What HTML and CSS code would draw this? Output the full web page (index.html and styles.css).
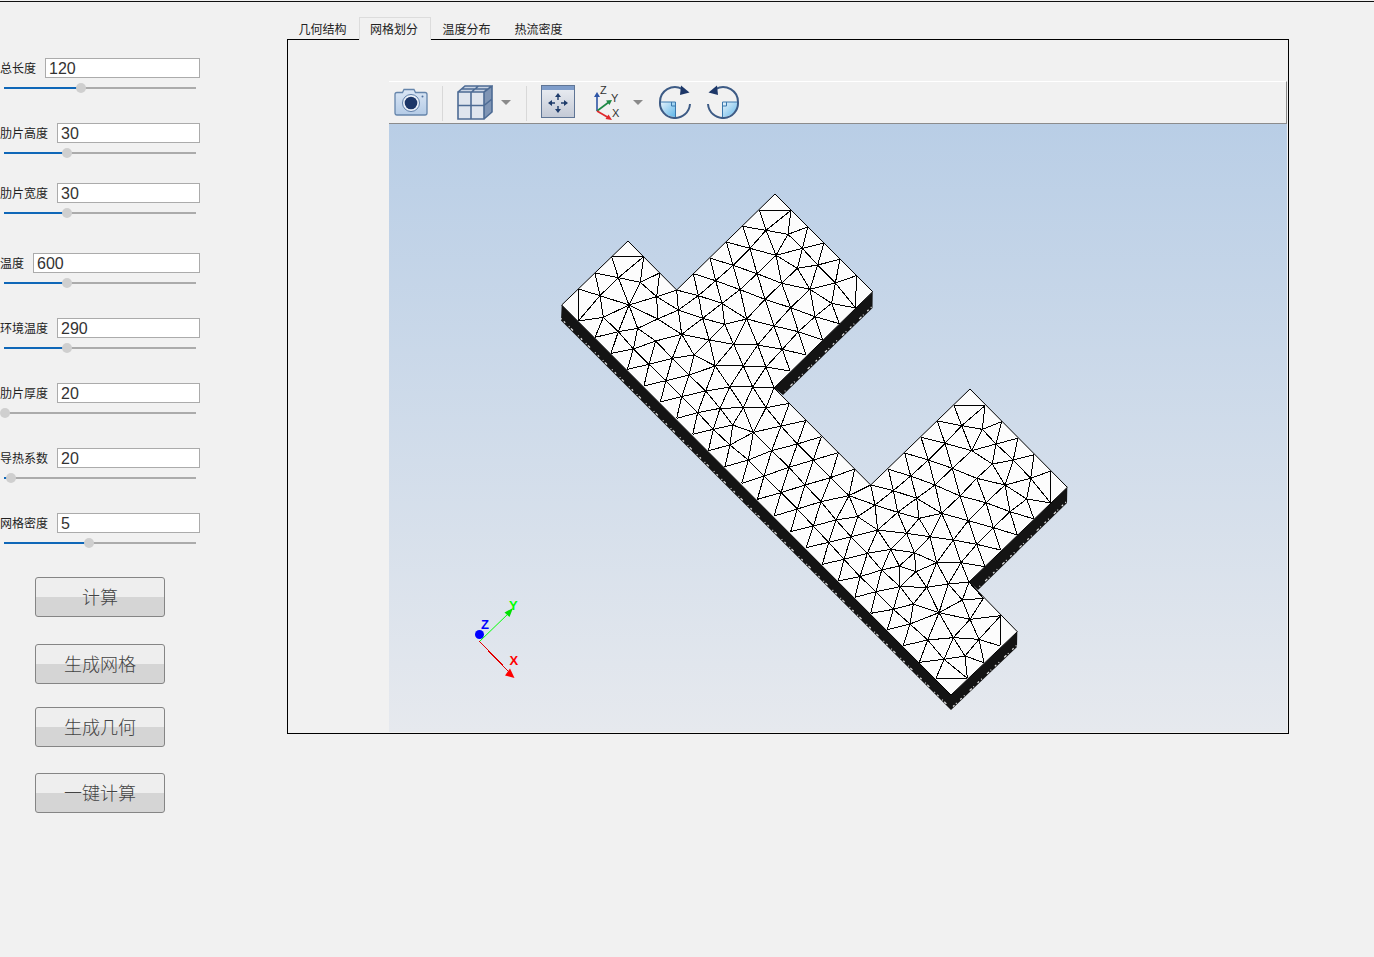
FILE: index.html
```html
<!DOCTYPE html>
<html lang="zh">
<head>
<meta charset="utf-8">
<title>肋片计算</title>
<link rel="stylesheet" href="styles.css">
</head>
<body>
<div class="topline"></div>
<div class="app">
  <aside class="sidebar">
    <div class="field gap-s"><div class="line"><label>总长度</label><input value="120"></div><div class="track"><div class="fill" style="width:77px"><span class="knob"></span></div></div></div>
    <div class="field gap-xs"><div class="line"><label>肋片高度</label><input value="30"></div><div class="track"><div class="fill" style="width:63px"><span class="knob"></span></div></div></div>
    <div class="field gap-m"><div class="line"><label>肋片宽度</label><input value="30"></div><div class="track"><div class="fill" style="width:63px"><span class="knob"></span></div></div></div>
    <div class="field gap-s"><div class="line"><label>温度</label><input value="600"></div><div class="track"><div class="fill" style="width:63px"><span class="knob"></span></div></div></div>
    <div class="field gap-s"><div class="line"><label>环境温度</label><input value="290"></div><div class="track"><div class="fill" style="width:63px"><span class="knob"></span></div></div></div>
    <div class="field gap-s"><div class="line"><label>肋片厚度</label><input value="20"></div><div class="track"><div class="fill" style="width:1px"><span class="knob"></span></div></div></div>
    <div class="field gap-s"><div class="line"><label>导热系数</label><input value="20"></div><div class="track"><div class="fill" style="width:7px"><span class="knob"></span></div></div></div>
    <div class="field"><div class="line"><label>网格密度</label><input value="5"></div><div class="track"><div class="fill" style="width:85px"><span class="knob"></span></div></div></div>
    <div class="actions">
      <button class="btn b1">计算</button>
      <button class="btn b2">生成网格</button>
      <button class="btn b3">生成几何</button>
      <button class="btn">一键计算</button>
    </div>
  </aside>
  <main class="tabs">
    <nav class="tabbar">
      <span class="tab">几何结构</span>
      <span class="tab active">网格划分</span>
      <span class="tab">温度分布</span>
      <span class="tab">热流密度</span>
    </nav>
    <section class="frame">
      <div class="viewer">
        <div class="toolbar">
          <svg class="tool camera" width="36" height="30" viewBox="0 0 36 30">
            <defs><linearGradient id="camg" x1="0" y1="0" x2="0" y2="1"><stop offset="0" stop-color="#dbe7f5"/><stop offset="1" stop-color="#b4cbe6"/></linearGradient></defs>
            <path d="M2 7.5Q2 5.5 4 5.5H9.5L11 2.5H21L22.500 5.500H32Q34 5.500 34 7.500V26Q34 28 32 28H4Q2 28 2 26Z" fill="url(#camg)" stroke="#6585ab" stroke-width="1.300"/>
            <circle cx="18" cy="16" r="8.500" fill="#eef3fa" stroke="#5f7fa8" stroke-width="1"/>
            <circle cx="18" cy="16" r="6.300" fill="#1d3768"/>
            <circle cx="29.500" cy="9.500" r="1" fill="#4f6f9c"/>
          </svg>
          <span class="sep"></span>
          <svg class="tool cube" width="36" height="36" viewBox="0 0 36 36">
            <path d="M1 7H27V34H1Z" fill="#dfe5ee"/>
            <path d="M1 7L8 1H35L27 7Z" fill="#c9d4e4"/>
            <path d="M27 7L35 1V27L27 34Z" fill="#7f95b5"/>
            <path d="M1 7H27V34H1ZM1 7L8 1H35L27 7M35 1V27L27 34M14 7V34M1 20.500H27M27 20.500L35 14M14.500 7L21.500 1M4.500 4H31" fill="none" stroke="#4d6b94" stroke-width="1.600"/>
          </svg>
          <svg class="tool drop d1" width="10" height="5" viewBox="0 0 10 5"><path d="M0 0H10L5 5Z" fill="#8a8a8a"/></svg>
          <span class="sep s2"></span>
          <svg class="tool fit" width="35" height="34" viewBox="0 0 35 34">
            <defs><linearGradient id="fitg" x1="0" y1="0" x2="0" y2="1"><stop offset="0" stop-color="#eceff4"/><stop offset="1" stop-color="#c3c9d5"/></linearGradient></defs>
            <rect x=".5" y=".5" width="33" height="32" fill="url(#fitg)" stroke="#5f7595"/>
            <rect x="1" y="1" width="32" height="4" fill="#7f9dca"/>
            <path d="M17 8L20 12H14ZM17 28L14 24H20ZM7 18L11 15V21ZM27 18L23 15V21Z" fill="#1f3c6b"/>
            <path d="M17 11V15M17 21V25M10 18H14M20 18H24" fill="none" stroke="#1f3c6b" stroke-width="1.400"/>
          </svg>
          <svg class="tool axes" width="36" height="38" viewBox="0 0 36 38">
            <path d="M5 27V11" stroke="#2e55a6" stroke-width="1.600"/><path d="M5 8L2 13H8Z" fill="#2e55a6"/>
            <path d="M5 27L17 18" stroke="#1f8a45" stroke-width="1.600"/><path d="M20 16L14 16.500L17.500 21Z" fill="#1f8a45"/>
            <path d="M5 27L17 34" stroke="#e0282c" stroke-width="1.600"/><path d="M20 36L13.500 35L16.500 30.500Z" fill="#e0282c"/>
            <text x="8" y="10" class="axt">Z</text><text x="19" y="18" class="axt">Y</text><text x="20" y="33" class="axt">X</text>
          </svg>
          <svg class="tool drop d2" width="10" height="5" viewBox="0 0 10 5"><path d="M0 0H10L5 5Z" fill="#8a8a8a"/></svg>
          <svg class="tool rot r1" width="34" height="34" viewBox="0 0 34 34">
            <defs><linearGradient id="rotg" x1="0" y1="0" x2="1" y2="1"><stop offset="0" stop-color="#e8f3fb"/><stop offset="1" stop-color="#5fb6e8"/></linearGradient></defs>
            <path d="M2 17H17V32A15 15 0 0 1 2 17Z" fill="url(#rotg)"/>
            <path d="M2 17H17.500V32M13.500 17V21H17.500" fill="none" stroke="#3a78ad" stroke-width="1"/>
            <path d="M2 17A15 15 0 0 1 24 3.800" fill="none" stroke="#3d5b85" stroke-width="2"/>
            <path d="M32 19A15 15 0 0 1 2 17" fill="none" stroke="#3d5b85" stroke-width="2"/>
            <path d="M23 0.500L31.500 7.500L22 10Z" fill="#1d3768"/>
          </svg>
          <svg class="tool rot r2" width="34" height="34" viewBox="0 0 34 34">
            <path d="M32 17H17V32A15 15 0 0 0 32 17Z" fill="url(#rotg)"/>
            <path d="M32 17H16.500V32M20.500 17V21H16.500" fill="none" stroke="#3a78ad" stroke-width="1"/>
            <path d="M32 17A15 15 0 0 0 10 3.800" fill="none" stroke="#3d5b85" stroke-width="2"/>
            <path d="M2 19A15 15 0 0 0 32 17" fill="none" stroke="#3d5b85" stroke-width="2"/>
            <path d="M11 0.500L2.500 7.500L12 10Z" fill="#1d3768"/>
          </svg>
        </div>
        <svg class="scene" width="898" height="608" viewBox="389 124 898 608">
          <g class="bands">
            <path d="M561.700 305L951 694.500V710L561 320.500ZM872.700 291.700L872.500 308L783 395L774 388ZM1067.300 487.300L1067 503L978 590L969 582ZM1017.300 631.700L1017 647L951 710V695Z"/>
          </g>
          <path class="fringe-w" d="M561 318.500L950.500 708M1016.500 645.500L953 706.500M871.500 307L784 392M1066 502L979 587"/>
          <path class="top" d="M561.700 305L628 241L676.700 290L775 194L872.700 291.700L774 388L870.700 485L970 389L1067.300 487.300L969 582L1017.300 631.700L951 695Z"/>
          <g transform="translate(550 185) scale(.33333)">
            <path class="mesh" d="M185 215 281 215M185 215 205 278M281 215 205 278M281 215 271 292M135 264 205 278M135 264 150 332M205 278 150 332M205 278 237 360M205 278 271 292M329 264 271 292M329 264 320 335M271 292 320 335M271 292 237 360M85 312 150 332M85 312 85 408M85 408 150 332M85 408 160 397M150 332 237 360M150 332 160 397M237 360 320 335M237 360 160 397M237 360 323 402M237 360 263 430M160 397 135 457M160 397 205 440M205 440 135 457M205 440 237 360M205 440 263 430M205 440 183 505M205 440 250 492M183 505 250 492M263 430 250 492M263 430 317 468M263 430 323 402M250 492 317 468M250 492 232 553M250 492 297 538M232 553 297 538M317 468 297 538M317 468 367 520M317 468 395 448M323 402 395 448M323 402 320 335M323 402 385 375M320 335 385 375M320 335 380 315M380 315 385 375M380 315 445 332M385 375 445 332M385 375 458 400M385 375 395 448M395 448 458 400M395 448 478 465M395 448 432 510M395 448 367 520M367 520 432 510M367 520 297 538M367 520 348 587M367 520 417 570M432 510 417 570M432 510 478 465M432 510 496 543M478 465 496 543M478 465 551 478M478 465 524 418M458 400 478 465M458 400 524 418M458 400 516 355M445 332 458 400M445 332 516 355M445 332 497 287M430 266 445 332M430 266 497 287M480 219 497 287M480 219 549 241M497 287 549 241M497 287 570 314M497 287 516 355M516 355 570 314M516 355 590 402M516 355 524 418M524 418 590 402M524 418 551 478M551 478 590 402M551 478 623 480M551 478 580 543M551 478 496 543M496 543 580 543M496 543 417 570M496 543 467 618M496 543 539 606M539 606 580 543M580 543 623 480M580 543 648 546M580 543 608 606M539 606 608 606M608 606 648 546M648 546 623 480M648 546 697 493M648 546 720 558M648 546 672 608M608 606 672 608M623 480 697 493M623 480 672 423M623 480 590 402M590 402 672 423M590 402 645 343M590 402 570 314M570 314 645 343M570 314 621 266M570 314 549 241M549 241 621 266M549 241 529 171M549 241 600 190M529 171 600 190M578 124 600 190M578 124 648 136M600 190 648 136M600 190 678 211M600 190 621 266M621 266 678 211M621 266 695 295M621 266 645 343M645 343 695 295M645 343 722 368M645 343 672 423M672 423 722 368M672 423 745 440M672 423 697 493M697 493 745 440M697 493 768 510M697 493 720 558M745 440 768 510M745 440 818 465M745 440 795 395M745 440 722 368M722 368 795 395M722 368 780 313M722 368 695 295M695 295 780 313M695 295 742 250M695 295 678 211M678 211 742 250M678 211 757 190M678 211 714 148M678 211 648 136M648 136 714 148M648 136 628 76M648 136 723 76M628 76 723 76M714 148 723 76M714 148 773 126M714 148 757 190M773 126 757 190M757 190 822 174M757 190 803 240M822 174 803 240M803 240 870 223M803 240 742 250M757 190 742 250M803 240 856 294M870 223 856 294M742 250 780 313M803 240 780 313M780 313 856 294M780 313 845 355M780 313 795 395M856 294 919 272M856 294 845 355M856 294 917 369M919 272 917 369M845 355 917 369M845 355 795 395M845 355 868 416M795 395 868 416M795 395 818 465M282 603 348 587M297 538 282 603M297 538 348 587M348 587 417 570M348 587 331 651M348 587 395 635M331 651 395 635M395 635 467 618M395 635 380 700M395 635 443 683M417 570 395 635M417 570 467 618M467 618 539 606M467 618 510 670M467 618 443 683M539 606 510 670M539 606 580 668M608 606 580 668M608 606 648 668M672 608 648 668M648 668 718 655M648 668 580 668M580 668 510 670M510 670 443 683M443 683 380 700M580 668 610 742M648 668 610 742M648 668 693 723M718 655 693 723M510 670 490 733M510 670 548 720M548 720 580 668M548 720 610 742M610 742 693 723"/>
          </g>
          <g transform="translate(680 410) scale(.33333)">
            <path class="mesh" d="M53 8 38 73M53 8 100 58M38 73 100 58M100 58 85 122M100 58 150 105M85 122 150 105M100 58 158 45M158 45 150 105M150 105 220 67M150 105 135 170M150 105 205 150M135 170 205 150M205 150 220 67M205 150 275 122M220 67 275 122M205 150 185 220M205 150 252 198M185 220 252 198M275 122 252 198M275 122 327 172M252 198 327 172M252 198 232 268M252 198 303 248M232 268 303 248M327 172 303 248M375 225 303 248M303 248 282 318M303 248 352 297M282 318 352 297M375 225 352 297M352 297 423 275M352 297 332 365M352 297 400 348M332 365 400 348M275 122 303 48M275 122 352 102"/>
          </g>
          <g transform="translate(780 380) scale(.33333)">
            <path class="mesh" d="M3 138 77 122M3 138 52 192M77 122 52 192M52 192 124 170M52 192 100 240M124 170 100 240M100 240 175 218M100 240 152 293M175 218 152 293M152 293 224 267M152 293 207 347M224 267 207 347M207 347 272 315M272 315 285 375M207 347 285 375M27 262 52 192M27 262 100 240M27 262 75 315M75 315 100 240M75 315 152 293M75 315 123 365M123 365 152 293M123 365 207 347M123 365 168 420M168 420 207 347M168 420 233 410M207 347 233 410M233 410 285 375M233 410 293 450M168 420 213 470M213 470 233 410M213 470 293 450M213 470 262 520M262 520 293 450M262 520 332 508M293 450 332 508M293 450 380 460M332 508 380 460M332 508 403 518M380 460 403 518M380 460 450 470M403 518 450 470M403 518 470 548M450 470 470 548M450 470 520 480M470 548 520 480M470 548 543 548M520 480 543 548M520 480 590 493M543 548 590 493M543 548 615 560M590 493 615 560M590 493 662 510M590 493 640 443M640 443 662 510M640 443 712 465M640 443 690 395M690 395 712 465M690 395 762 417M690 395 740 357M740 357 762 417M740 357 812 369M740 357 675 315M675 315 690 395M675 315 752 295M752 295 740 357M752 295 812 273M752 295 812 369M812 273 812 369M752 295 700 240M762 224 752 295M700 240 762 224M700 240 675 315M700 240 637 252M637 252 675 315M637 252 648 192M648 192 700 240M648 192 713 175M713 175 700 240M648 192 665 125M665 125 607 148M607 148 648 192M607 148 575 212M575 212 648 192M575 212 637 252M575 212 517 265M517 265 590 295M590 295 637 252M590 295 675 315M590 295 618 368M618 368 675 315M618 368 690 395M618 368 640 443M618 368 565 422M565 422 640 443M565 422 590 493M565 422 520 480M565 422 485 400M485 400 520 480M485 400 450 470M485 400 417 415M417 415 450 470M417 415 380 460M417 415 353 397M353 397 380 460M353 397 293 450M353 397 285 375M285 375 293 450M285 375 340 332M340 332 353 397M340 332 272 315M340 332 325 268M340 332 392 288M340 332 410 355M392 288 325 268M392 288 374 219M392 288 445 240M392 288 465 315M392 288 410 355M410 355 353 397M410 355 417 415M410 355 465 315M410 355 485 400M465 315 485 400M465 315 517 265M465 315 445 240M465 315 540 348M517 265 540 348M517 265 445 240M517 265 495 190M445 240 495 190M445 240 374 219M445 240 423 172M423 172 495 190M495 190 472 123M495 190 545 137M495 190 575 212M472 123 545 137M545 137 522 77M545 137 615 77M545 137 575 212M545 137 607 148M522 77 615 77M615 77 607 148M540 348 485 400M540 348 565 422M540 348 590 295M540 348 618 368M262 520 192 538M213 470 146 487M146 487 168 420M146 487 192 538M100 438 168 420M100 438 146 487M100 438 123 365M78 503 146 487M78 503 100 438M127 553 146 487M127 553 192 538M192 538 213 470M192 538 240 590M175 603 192 538M175 603 240 590M240 590 262 520M240 590 305 570M262 520 305 570M305 570 332 508M305 570 358 558M332 508 358 558M358 558 403 518M358 558 408 575M403 518 408 575M408 575 470 548M408 575 440 622M408 575 360 620M358 558 360 620M305 570 360 620M305 570 288 635M288 635 240 590M288 635 360 620M225 652 288 635M225 652 240 590M272 700 288 635M272 700 340 688M288 635 340 688M340 688 360 620M340 688 400 672M360 620 400 672M360 620 440 622M400 672 440 622M400 672 477 698M440 622 477 698M440 622 505 612M440 622 470 548M470 548 505 612M543 548 505 612M505 612 567 606M543 548 567 606M505 612 477 698M505 612 547 660M567 606 547 660M567 606 610 655M547 660 610 655M547 660 477 698M547 660 570 718M610 655 570 718M477 698 570 718M570 718 662 707M662 707 660 798M662 707 597 778M570 718 597 778M597 778 660 798M597 778 612 848M597 778 555 828M612 848 555 828M570 718 520 773M520 773 597 778M520 773 555 828M520 773 477 698M520 773 443 780M477 698 443 780M443 780 492 838M443 780 418 847M418 847 492 838M492 838 555 828M492 838 520 773M492 838 468 895M468 895 562 895M492 838 562 895M555 828 562 895M477 698 390 732M400 672 390 732M340 688 390 732M390 732 322 749M340 688 322 749M390 732 370 797M390 732 443 780M370 797 443 780"/>
          </g>
          <path class="axis-y" d="M479.500 641.500L510 612"/>
          <path class="axis-x" d="M479.500 641.500L512 675"/>
          <path class="head-y" d="M513 608L504.500 612.500L509.500 617Z"/>
          <path class="head-x" d="M514.500 678L505 675.500L510 668.500Z"/>
          <circle class="dot" cx="479.500" cy="634.500" r="4.500"/>
          <text class="lz" x="481" y="629">Z</text>
          <text class="ly" x="509" y="610">Y</text>
          <text class="lx" x="509.500" y="665">X</text>
        </svg>
      </div>
    </section>
  </main>
</div>
</body>
</html>
```
FILE: styles.css
```css
* { box-sizing: border-box; }
html, body { margin: 0; height: 100%; }
body {
  background: #f1f1f1;
  font-family: "Noto Sans CJK SC", "Liberation Sans", sans-serif;
  color: #222;
  overflow: hidden;
}
.topline { height: 1px; margin-top: 1px; background: #111; }
.app { display: flex; align-items: flex-start; }

.sidebar { width: 200px; padding-top: 56px; display: flex; flex-direction: column; flex: none; }
.field { margin-bottom: 34px; }
.field.gap-xs { margin-bottom: 29px; }
.field.gap-m { margin-bottom: 39px; }
.field.gap-s { margin-bottom: 34px; }
.line { display: flex; align-items: center; gap: 9px; height: 20px; }
.line label { font-size: 12px; white-space: nowrap; color: #222; line-height: 20px; }
.line input {
  flex: 1; min-width: 0; height: 20px; padding: 2px 3px 0; border: 1px solid #ababab; background: #fff;
  font: 16px "Liberation Sans", sans-serif; color: #333; border-radius: 0; outline: none;
}
.track { margin: 9px 4px 0; height: 2px; background: #ababab; }
.fill { position: relative; height: 2px; background: #0f67b8; }
.knob {
  position: absolute; right: -5px; top: -4px; width: 10px; height: 10px; border-radius: 50%;
  background: #cfcfcf;
}

.actions { display: flex; flex-direction: column; align-items: flex-start; padding-left: 35px; margin-top: -1px; }
.btn {
  width: 130px; height: 40px; padding: 0 0 2px; border: 1px solid #858585; border-radius: 3px;
  background: linear-gradient(#eeeeee 50%, #d5d5d5 50%);
  font-family: "Noto Sans CJK SC", sans-serif; font-size: 18px; font-weight: 300; color: #444;
  display: flex; align-items: center; justify-content: center; line-height: 1;
}
.b1 { margin-bottom: 27px; }
.b2 { margin-bottom: 23px; }
.b3 { margin-bottom: 26px; }

.tabs { margin-left: 87px; margin-top: 14px; width: 1002px; flex: none; }
.tabbar { display: flex; height: 24px; position: relative; z-index: 1; }
.tab { width: 72px; text-align: center; font-size: 12px; line-height: 24px; padding: 1px 1px 0 0; color: #222; }
.tab.active { margin-top: 1px; padding: 0 2px 0 0; border: 1px solid #dcdcdc; border-bottom: none; background: #f1f1f1; line-height: 22px; }
.frame {
  height: 695px; margin-top: -1px; border: 1px solid #000; padding: 41px 1px 1px 101px;
}
.viewer { height: 651px; display: flex; flex-direction: column; }
.toolbar {
  height: 43px; flex: none; background: #f1f1f1; border-top: 1px solid #fff;
  border-right: 1px solid #8c8c8c; border-bottom: 1px solid #8c8c8c;
  position: relative;
}
.tool { position: absolute; display: block; }
.camera { left: 4px; top: 5px; }
.sep { position: absolute; left: 53px; top: 4px; width: 1px; height: 35px; background: #d8d8d8; }
.sep.s2 { left: 137px; }
.cube { left: 68px; top: 3px; }
.drop.d1 { left: 112px; top: 18px; }
.fit { left: 152px; top: 3px; }
.axes { left: 203px; top: 2px; }
.axt { font: 11px "Liberation Sans", sans-serif; fill: #333; }
.drop.d2 { left: 244px; top: 18px; }
.rot.r1 { left: 269px; top: 3px; }
.rot.r2 { left: 317px; top: 3px; }

.scene {
  display: block; flex: none;
  background: linear-gradient(#b9cee6, #e6e9ee);
}
.bands path { fill: #141414; }
.fringe-w { fill: none; stroke: #e8e8e8; stroke-width: 1.200; stroke-dasharray: 1 3 2 5 1 2 3 7; }
.top { fill: #fcfcfc; stroke: #000; stroke-width: 1; }
.mesh { fill: none; stroke: #000; stroke-width: 1; vector-effect: non-scaling-stroke; shape-rendering: crispEdges; }
.axis-y { stroke: #00ff00; stroke-width: 1; fill: none; }
.axis-x { stroke: #e00000; stroke-width: 1; fill: none; shape-rendering: crispEdges; }
.head-y { fill: #00e000; }
.head-x { fill: #ff0000; }
.dot { fill: #0000ff; }
.lz, .ly, .lx { font: bold 13px "Liberation Sans", sans-serif; }
.lz { fill: #0000ff; }
.ly { fill: #00ff00; }
.lx { fill: #ff0000; }
```
